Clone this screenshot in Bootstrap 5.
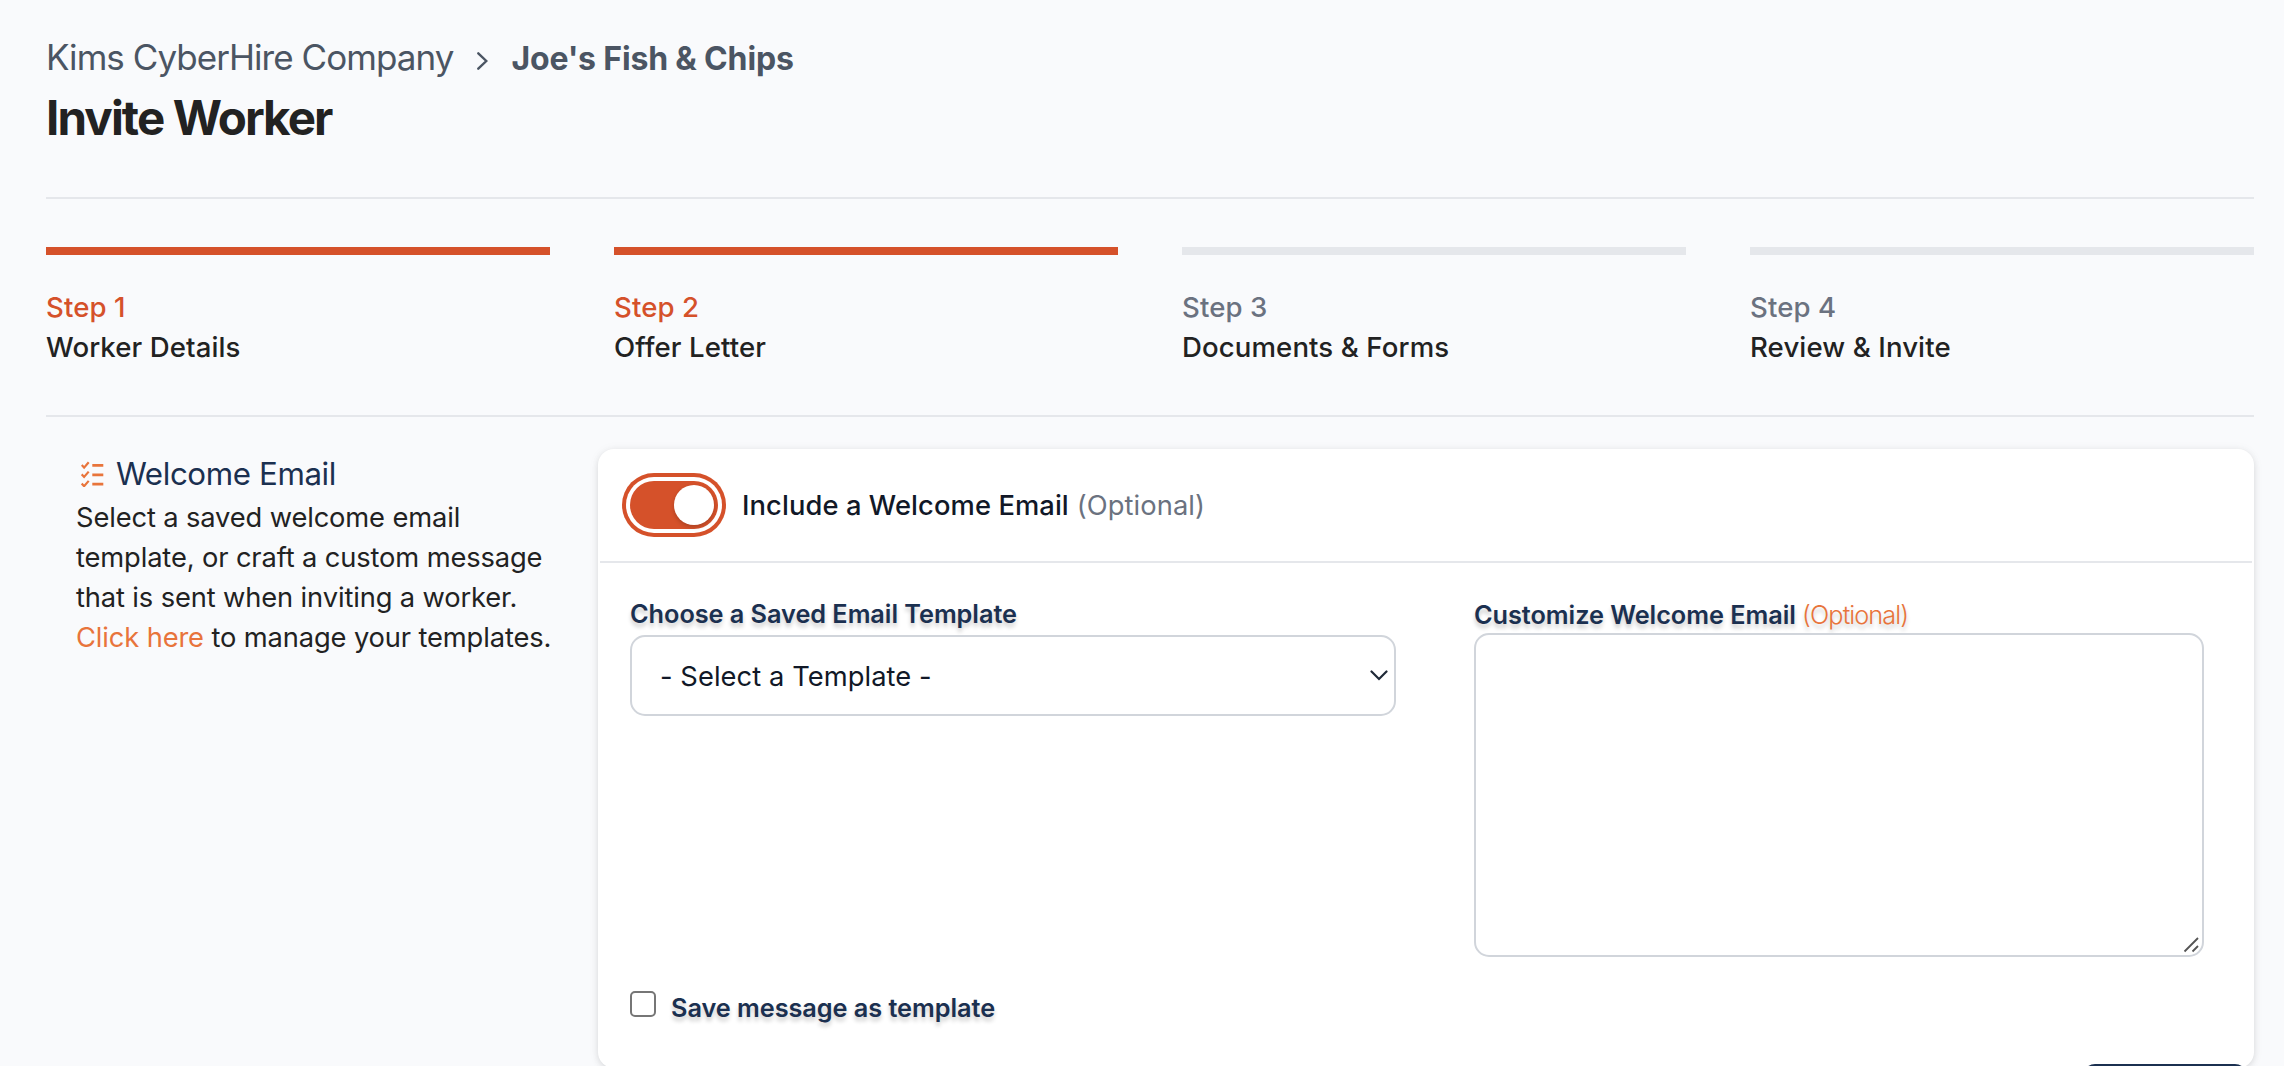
<!DOCTYPE html>
<html lang="en">

<head>
  <meta charset="UTF-8" />
  <title>Invite Worker</title>
  <meta name="viewport" content="width=device-width, initial-scale=1" />
  <link href="https://cdn.jsdelivr.net/npm/bootstrap@5.3.3/dist/css/bootstrap.min.css" rel="stylesheet" />
  <script src="https://cdn.jsdelivr.net/npm/bootstrap@5.3.3/dist/js/bootstrap.bundle.min.js"></script>
  <style>
    :root {
      --brand: #d5512a;
      --brand-light: #e8743b;
      --navy: #1b3050;
      --line: #e5e7eb;
      --field-line: #d1d5db;
    }

    body {
      background: #f9fafc;
      color: #222;
      font-family: Inter, "Liberation Sans", sans-serif;
      font-size: 27.3px;
      line-height: 40px;
    }

    .page { height: 100vh; overflow: hidden; padding: 33px 30px 0 46px; }

    /* Header */
    .page-head { padding-bottom: 51px; border-bottom: 2px solid var(--line); }
    .crumbs { height: 48px; line-height: 48px; color: #4b5563; }
    .crumb-parent { font-size: 35px; font-weight: 400; letter-spacing: -.95px; }
    .crumbs svg { margin: 0 23px 2px 24px; }
    .crumb-current { font-size: 32px; font-weight: 700; letter-spacing: -.16px; }
    .page-title { margin: 9px 0 0; font-size: 47.5px; line-height: 56px; font-weight: 700; letter-spacing: -1.9px; }

    /* Steps */
    .steps { gap: 64px; padding: 48px 0; border-bottom: 2px solid var(--line); }
    .step-item { flex: 1 1 0; border-top: 8px solid var(--line); padding-top: 32px; font-size: 27.6px; font-weight: 500; letter-spacing: .1px; }
    .step-item.done { border-color: var(--brand); }
    .step-no { color: #6b7280; }
    .done .step-no { color: var(--brand); }

    /* Sidebar */
    .content-row { padding-top: 32px; }
    .intro { width: 552px; flex: none; padding: 5px 0 0 30px; }
    .intro h2 { margin: 0; font-size: 31.3px; line-height: 40px; font-weight: 400; letter-spacing: -.4px; color: var(--navy); }
    .intro h2 svg { margin: 0 12px 0 5px; }
    .intro p { margin: 4px 0 0; letter-spacing: -.13px; white-space: nowrap; }
    .intro a { color: var(--brand-light); text-decoration: none; }

    /* Panel */
    .panel { height: 619px; border: 0; border-radius: 16px; box-shadow: 0 2px 6px rgba(0, 0, 0, .1), 0 1px 12px rgba(0, 0, 0, .05); color: #111827; }
    .panel-head { height: 114px; margin: 0 2px; padding-left: 30px; border-bottom: 2px solid var(--line); }
    .toggle { width: 88px; height: 48px; padding: 4px; border-radius: 24px; background: var(--brand); box-shadow: 0 0 0 4px #fff, 0 0 0 8px var(--brand); }
    .knob { width: 40px; height: 40px; border-radius: 50%; background: #fff; box-shadow: 0 2px 4px rgba(0, 0, 0, .2); }
    .toggle-text { padding-top: 1px; letter-spacing: .1px; }
    .toggle-text b { font-weight: 500; }
    .toggle-text span { color: #6b7280; }
    .panel-body { padding: 33px 50px 0 32px; }
    .field-label { display: block; font-size: 25.3px; line-height: 36px; font-weight: 600; letter-spacing: -.05px; color: var(--navy); text-shadow: 0 4px 4px rgba(0, 0, 0, .2); }
    .field-label .opt { font-weight: 300; letter-spacing: -.9px; color: var(--brand-light); }
    .col-left { width: 766px; }
    .col-right { width: 730px; padding-top: 1px; }
    .picker { height: 81px; margin-top: 3px; padding: 2px 40px 0 28px; border: 2px solid var(--field-line); border-radius: 15px; background: #fff; color: #111827; font-size: 27.3px; line-height: 40px; letter-spacing: .07px; }
    .picker-arrow { position: absolute; right: 8px; top: 35px; }
    .message { height: 324px; border: 2px solid var(--field-line); border-radius: 15px; resize: none; }
    .grip { position: absolute; right: 3px; bottom: 3px; }
    .save-row { margin-top: 33px; }
    .tick { appearance: none; width: 26px; height: 26px; margin: 1px 15px 0 0; border: 2px solid #767676; border-radius: 5px; background: #fff; }
    .next-btn { position: absolute; right: 7px; top: 615px; width: 164px; height: 76px; border-radius: 12px; background: var(--navy); }
  </style>
</head>

<body>
  <div class="page">

    <!-- Breadcrumb and title -->
    <header class="page-head">
      <div class="crumbs d-flex align-items-baseline">
        <span class="crumb-parent">Kims CyberHire Company</span>
        <svg width="11" height="18" viewBox="0 0 11 18" fill="none" stroke="#4b5563" stroke-width="2.4" stroke-linecap="round"><path d="M1.300 1.300L9.300 9l-8 7.700" /></svg>
        <span class="crumb-current">Joe's Fish &amp; Chips</span>
      </div>
      <h1 class="page-title">Invite Worker</h1>
    </header>

    <!-- Steps -->
    <nav class="steps d-flex">
      <div class="step-item done">
        <div class="step-no">Step 1</div>
        <div>Worker Details</div>
      </div>
      <div class="step-item done">
        <div class="step-no">Step 2</div>
        <div>Offer Letter</div>
      </div>
      <div class="step-item">
        <div class="step-no">Step 3</div>
        <div>Documents &amp; Forms</div>
      </div>
      <div class="step-item">
        <div class="step-no">Step 4</div>
        <div>Review &amp; Invite</div>
      </div>
    </nav>

    <div class="content-row d-flex">
      <aside class="intro">
        <h2 class="d-flex align-items-center">
          <svg width="23" height="26" viewBox="0 0 23 26" fill="none" stroke="#e8743b">
            <path stroke-width="2.200" d="M.7 4l2.400 2.600L7.700 1.300M.7 13.300l2.400 2.600 4.600-5.300M.7 22.600l2.400 2.600 4.600-5.300" />
            <path stroke-width="2.800" d="M11.300 4.400H22.300M11.300 13.900H22.300M11.300 23.200H22.300" />
          </svg>
          Welcome Email
        </h2>
        <p>
          Select a saved welcome email<br>
          template, or craft a custom message<br>
          that is sent when inviting a worker.<br>
          <a href="#">Click here</a> to manage your templates.
        </p>
      </aside>

      <main class="panel card flex-grow-1">
        <div class="panel-head d-flex align-items-center">
          <div class="toggle d-flex justify-content-end" role="switch" aria-checked="true">
            <div class="knob"></div>
          </div>
          <div class="toggle-text ms-4"><b>Include a Welcome Email</b> <span>(Optional)</span></div>
        </div>

        <div class="panel-body">
          <div class="d-flex justify-content-between">
            <div class="col-left">
              <label class="field-label" for="template">Choose a Saved Email Template</label>
              <div class="position-relative">
                <select id="template" class="picker form-select">
                  <option>- Select a Template -</option>
                </select>
                <svg class="picker-arrow" width="18" height="11" viewBox="0 0 18 11" fill="none" stroke="#1f2937" stroke-width="2.2" stroke-linecap="round"><path d="M1.500 1.500L9 9l7.500-7.500" /></svg>
              </div>
            </div>
            <div class="col-right">
              <label class="field-label" for="message">Customize Welcome Email <span class="opt">(Optional)</span></label>
              <div class="position-relative">
                <textarea id="message" class="message form-control"></textarea>
                <svg class="grip" width="18" height="18" viewBox="0 0 18 18" stroke="#555" stroke-width="1.800"><path d="M1.500 15.500L15 2M9.500 15.500l5.500-5.500" /></svg>
              </div>
            </div>
          </div>
          <div class="save-row d-flex">
            <input id="save" class="tick" type="checkbox" />
            <label class="field-label" for="save">Save message as template</label>
          </div>
        </div>
        <button class="next-btn btn" type="button"></button>
      </main>
    </div>

  </div>
</body>

</html>
